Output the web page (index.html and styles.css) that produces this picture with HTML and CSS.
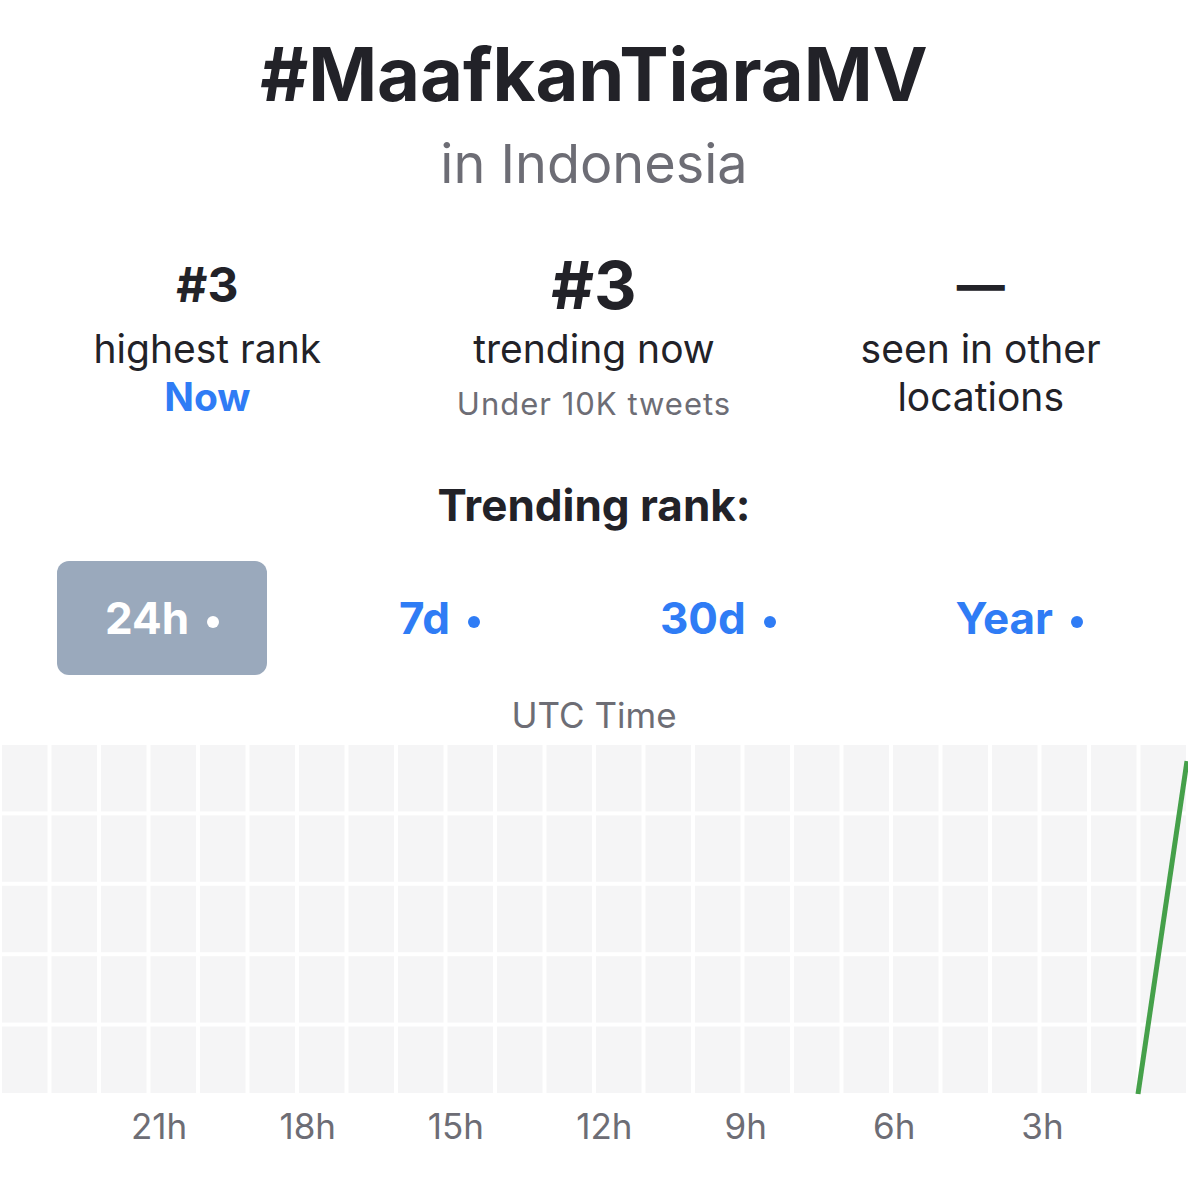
FILE: index.html
```html
<!DOCTYPE html>
<html lang="en">
<head>
    <meta charset="UTF-8">
    <title>#MaafkanTiaraMV in Indonesia</title>
    <link rel="stylesheet" href="styles.css">
</head>
<body>
<div id="main">
    <h1 class="title">#MaafkanTiaraMV</h1>
    <div class="location">in Indonesia</div>

    <div class="stats">
        <div class="stat">
            <div class="value">#3</div>
            <div class="label">highest rank</div>
            <div class="label when">Now</div>
        </div>
        <div class="stat">
            <div class="value big">#3</div>
            <div class="label">trending now</div>
            <div class="sub">Under 10K tweets</div>
        </div>
        <div class="stat">
            <div class="value">&mdash;</div>
            <div class="label">seen in other<br>locations</div>
        </div>
    </div>

    <h2 class="section">Trending rank:</h2>

    <div class="tabs">
        <div class="tab active">24h<span class="dot"></span></div>
        <div class="tab">7d<span class="dot"></span></div>
        <div class="tab">30d<span class="dot"></span></div>
        <div class="tab">Year<span class="dot"></span></div>
    </div>

    <div class="axis-title">UTC Time</div>
    <div class="chart">
        <svg class="line" viewBox="0 0 1188 352" width="1188" height="352">
            <polyline points="1138,351 1187,18" fill="none" stroke="#45a04a" stroke-width="5"/>
        </svg>
    </div>
    <div class="axis">
        <span>21h</span>
        <span>18h</span>
        <span>15h</span>
        <span>12h</span>
        <span>9h</span>
        <span>6h</span>
        <span>3h</span>
    </div>
</div>
</body>
</html>
```

FILE: styles.css
```css
body {
    margin: 0;
    background: #fff;
    color: #222228;
    font-family: Inter, "Noto Sans", sans-serif;
}

#main {
    width: 1188px;
    text-align: center;
}

.title {
    margin: 29px 0 0;
    font-size: 74px;
    line-height: 90px;
    font-weight: 700;
}

.location {
    margin-top: 13px;
    font-size: 54px;
    line-height: 64px;
    color: #6d6d75;
}

.stats {
    display: flex;
    align-items: flex-start;
    padding: 0 14px;
    margin-top: 54px;
}

.stat {
    flex: 1;
}

.value {
    margin-bottom: 5px;
    font-size: 48px;
    line-height: 70px;
    font-weight: 700;
}

.value.big {
    font-size: 66px;
}

.label {
    font-size: 39px;
    line-height: 48px;
}

.label.when {
    color: #2f7cf5;
    font-weight: 700;
}

.sub {
    margin-top: 6px;
    font-size: 31px;
    line-height: 50px;
    color: #6d6d75;
    letter-spacing: 1px;
}

.section {
    margin: 48px 0 0;
    font-size: 44px;
    line-height: 56px;
    font-weight: 700;
}

.tabs {
    display: flex;
    justify-content: space-between;
    padding: 0 57px;
    margin-top: 28px;
}

.tab {
    padding: 0 48px;
    height: 114px;
    line-height: 114px;
    font-size: 44px;
    font-weight: 700;
    color: #2f7cf5;
    border-radius: 12px;
}

.tab.active {
    background: #9aa9bc;
    color: #fff;
}

.dot {
    display: inline-block;
    width: 12px;
    height: 12px;
    margin-left: 18px;
    border-radius: 50%;
    background: currentColor;
    vertical-align: middle;
}

.axis-title {
    margin-top: 20px;
    font-size: 35px;
    line-height: 40px;
    color: #6d6d75;
}

.chart {
    position: relative;
    height: 352px;
    margin-top: 8px;
    background-color: #f5f5f6;
    background-image:
        linear-gradient(to right, #fff 1.5px, transparent 1.5px, transparent 48px, #fff 48px),
        linear-gradient(to bottom, #fff 1.5px, transparent 1.5px, transparent 68.9px, #fff 68.9px);
    background-size: 49.5px 100%, 100% 70.4px;
}

.line {
    position: absolute;
    top: 0;
    left: 0;
}

.axis {
    display: flex;
    padding-left: 131px;
    margin-top: 11px;
    font-size: 35px;
    line-height: 40px;
    color: #6d6d75;
    text-align: left;
}

.axis span {
    width: 148.4px;
    flex: none;
}
```
